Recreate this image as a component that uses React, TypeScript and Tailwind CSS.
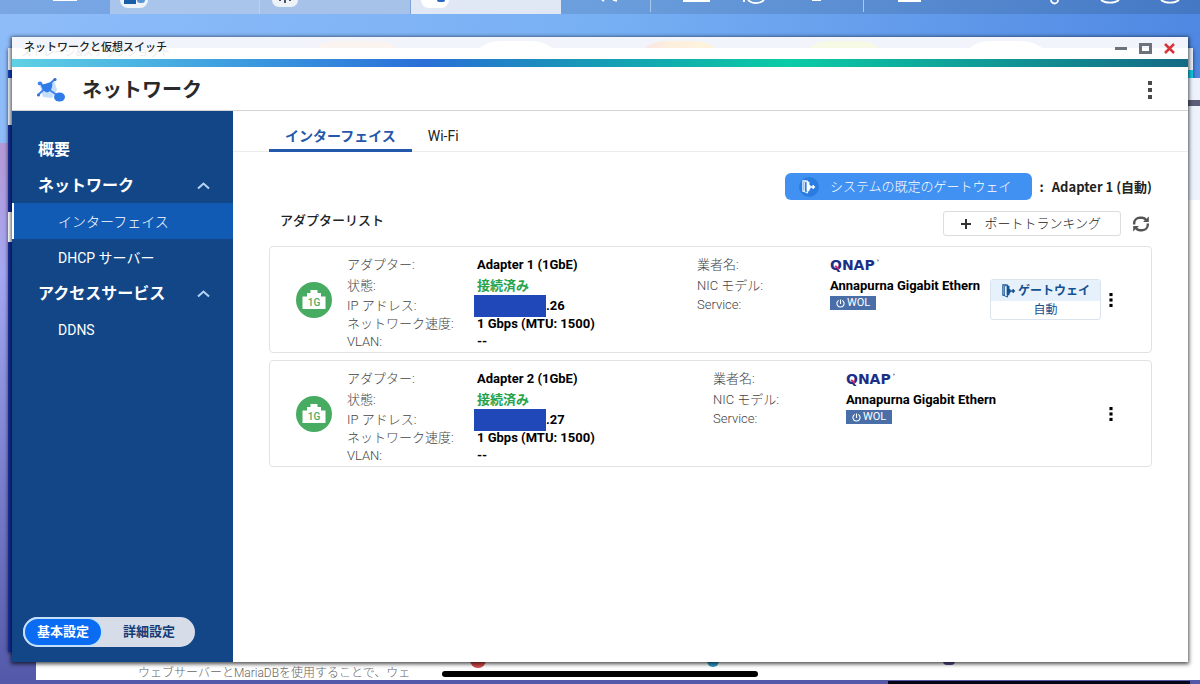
import { useState } from "react";

type Adapter = {
  name: string;
  host: string;
  gateway: boolean;
};

const adapters: Adapter[] = [
  { name: "Adapter 1 (1GbE)", host: ".26", gateway: true },
  { name: "Adapter 2 (1GbE)", host: ".27", gateway: false },
];

function NetworkLogo() {
  return (
    <svg viewBox="0 0 30 26" className="h-[26px] w-[30px]">
      <path d="M4 9 18 3l3 10-5 8-9-1Z" fill="#c5defb" />
      <path d="M3 6 24 20M19 2 2 18" stroke="#3f83ec" strokeWidth="1.800" strokeLinecap="round" />
      <path d="M5 7.500c4 0 7-2 11-2 1 5-1 9-5 10-3-1-6-4-6-8Z" fill="#2f7be8" />
      <ellipse cx="4" cy="6.500" rx="2.300" ry="2" fill="#3f83ec" />
      <circle cx="19" cy="2.500" r="1.600" fill="#3a6fd0" />
      <circle cx="2.500" cy="18" r="1.500" fill="#3a6fd0" />
      <ellipse cx="23.500" cy="20" rx="5.500" ry="4.500" fill="#2f7be8" />
    </svg>
  );
}

function Kebab({ className }: { className: string }) {
  return (
    <svg viewBox="0 0 4 18" fill="currentColor" className={className}>
      <rect width="4" height="4" />
      <rect y="7" width="4" height="4" />
      <rect y="14" width="4" height="4" />
    </svg>
  );
}

function Chevron() {
  return (
    <svg viewBox="0 0 13 8" fill="none" stroke="currentColor" strokeWidth="2" className="h-2 w-[13px] text-[#b9d3f5]">
      <path d="M1 6.500 6.500 1.500 12 6.500" />
    </svg>
  );
}

function DoorIcon({ className }: { className: string }) {
  return (
    <svg viewBox="0 0 16 16" className={className}>
      <path d="M6 2H2v11h2" fill="none" stroke="currentColor" strokeWidth="1.200" />
      <path d="M3.500 3.500 7 2v13l-3.500-1.500Z" fill="none" stroke="currentColor" strokeWidth="1" />
      <path d="M6 3h3v3.500h1V11H9v2H6Z" fill="currentColor" />
      <path d="M9 8.500h6M13 6.300v4.400" fill="none" stroke="currentColor" strokeWidth="1.500" />
    </svg>
  );
}

function RefreshIcon() {
  return (
    <svg viewBox="0 0 18 18" fill="none" stroke="#555" strokeWidth="2.400" className="h-[18px] w-[18px]">
      <path d="M2.200 9.500V8A5.500 5.500 0 0 1 7.700 2.800h2.600A5 5 0 0 1 14 5M15.800 8.500V10a5.500 5.500 0 0 1-5.500 5.200H7.700A5 5 0 0 1 4 13" />
      <path d="M16.800 1.500V7H11ZM1.200 16.500V11H7Z" fill="#555" stroke="none" />
    </svg>
  );
}

function PortIcon() {
  return (
    <svg viewBox="0 0 36 36" className="h-9 w-9">
      <circle cx="18" cy="18" r="18" fill="#47ab62" />
      <path d="M6.500 27V14.500H11V11h3.500V8h7v3H25v3.500h4.500V27Z" fill="#fff" />
      <text x="18" y="23.500" textAnchor="middle" fontSize="10" fontWeight="500" fill="#47ab62">
        1G
      </text>
    </svg>
  );
}

function QnapLogo() {
  return (
    <svg viewBox="0 0 56 20" role="img" aria-label="QNAP" className="h-5 w-14">
      <text x="0" y="15" fontSize="14" fontWeight="700" fill="#1c2f86" className="font-['DejaVu_Sans']">
        QNAP
      </text>
      <path d="m5 11 4 3" stroke="#d8266b" strokeWidth="2" />
      <circle cx="48" cy="5.500" r="1" fill="#8a95c4" />
    </svg>
  );
}

function AdapterCard({ adapter }: { adapter: Adapter }) {
  return (
    <li className="flex items-center rounded border border-[#e2e2e4] pl-[26px] text-[13px] [&_dd]:font-bold [&_dd]:whitespace-nowrap [&_dt]:font-light [&_dt]:text-[#444]">
      <PortIcon />
      <dl className={`ml-[15px] grid shrink-0 grid-cols-[130px_1fr] grid-rows-[22px_20px_19px_18px_18px] items-center pt-[7px] pb-px text-black ${adapter.gateway ? "w-[350px]" : "w-[366px]"}`}>
        <dt>アダプター:</dt>
        <dd>{adapter.name}</dd>
        <dt>状態:</dt>
        <dd className="text-[#27a34b]">接続済み</dd>
        <dt>IP アドレス:</dt>
        <dd className="flex items-center">
          <span className="-ml-[3px] h-[22px] w-[72px] shrink-0 bg-[#2148b8]" />
          {adapter.host}
        </dd>
        <dt>ネットワーク速度:</dt>
        <dd>1 Gbps (MTU: 1500)</dd>
        <dt>VLAN:</dt>
        <dd>--</dd>
      </dl>
      <dl className="grid min-w-0 flex-1 grid-cols-[133px_1fr] grid-rows-[22px_20px_18px] items-center self-start pt-[7px] text-black">
        <dt>業者名:</dt>
        <dd>
          <QnapLogo />
        </dd>
        <dt>NIC モデル:</dt>
        <dd>Annapurna Gigabit Ethern</dd>
        <dt>Service:</dt>
        <dd className="flex self-start">
          <span className="flex h-[14px] items-center gap-[2px] bg-[#4a6fa8] px-[6px] text-[11px] font-normal text-white">
            <svg viewBox="0 0 10 10" fill="none" stroke="currentColor" strokeWidth="1.200" className="h-[9px] w-[9px]">
              <path d="M3 1.500a4 4 0 1 0 4 0M5 .5v5" />
            </svg>
            WOL
          </span>
        </dd>
      </dl>
      {adapter.gateway && (
        <div className="w-[111px] shrink-0 rounded-[3px] border border-[#dbe3ee] text-center text-xs text-[#15508f]">
          <div className="flex h-[21px] items-center justify-center gap-0.5 bg-[#e6f1fc] font-bold">
            <DoorIcon className="h-[15px] w-[15px]" />
            ゲートウェイ
          </div>
          <div className="h-[18px] leading-[18px]">自動</div>
        </div>
      )}
      <button type="button" aria-label={`${adapter.name} メニュー`} className="mr-[30px] flex w-5 shrink-0 justify-center text-black">
        <Kebab className="h-[14px] w-1" />
      </button>
    </li>
  );
}

function Taskbar() {
  return (
    <div className="flex h-[14px] shrink-0 overflow-hidden bg-linear-to-r from-[#7aa6e4] via-[#6b9edc] to-[#4478c4]">
      <div className="flex w-[110px] shrink-0 justify-center pl-5">
        <span className="h-px w-6 bg-white" />
      </div>
      <div className="w-[150px] shrink-0 border-r border-[#b9cff0] bg-[#a9c5ec] pl-[10px]">
        <div className="flex h-2 w-7 items-start gap-px rounded-b-lg bg-[#eef3fa] pl-1">
          <span className="h-1 w-3 bg-[#1c5da8]" />
          <span className="h-[3px] w-2 rounded-b bg-[#5a94d6]" />
        </div>
      </div>
      <div className="w-[151px] shrink-0 border-r border-[#7fa3d8] bg-[#a6c2e9] pl-3">
        <div className="flex h-[7px] w-[26px] justify-center rounded-b-lg bg-[#eef1f5]">
          <svg viewBox="0 0 14 4" className="h-1 w-[14px]">
            <path d="M2 0v1M7 0v3M12 0v1" stroke="#4b5460" strokeWidth="2" />
          </svg>
        </div>
      </div>
      <div className="w-[150px] shrink-0 bg-[#e0e8f5] pl-[10px]">
        <div className="flex h-2 w-7 justify-center rounded-b-lg bg-white pl-3">
          <span className="h-0.5 w-2 rounded-b bg-[#2b66c4]" />
        </div>
      </div>
      <svg viewBox="0 0 639 14" preserveAspectRatio="none" fill="none" stroke="#fff" strokeWidth="1.800" className="h-[14px] min-w-0 flex-1">
        <path d="M41 0l2 1M52 0l4 1M122 1h27M337 1h23M251 0h9M183 0v2M187 0a10 8 0 0 0 16 0M490 0a3.500 3.500 0 0 0 7 0M540 0a12 8 0 0 0 18 0M600 0a12 8 0 0 0 18 0" />
        <path d="M89.500 0v12M302.500 0v12" stroke="#a9c8f0" strokeWidth="1" />
      </svg>
    </div>
  );
}

function BackWindows() {
  return (
    <>
      <div className="absolute top-12 right-[7px] bottom-8 left-2 bg-[#152f96] shadow-[0_1px_4px_rgba(0,0,0,0.6)]">
        <div className="h-[22px] bg-[#e9f0fb]" />
        <div className="h-2 bg-linear-to-r from-[#1540b8] to-[#12c8e0]" />
        <div className="h-[47px] bg-[#e9eef8]" />
        <div className="mt-[87px] h-[30px] w-1 bg-white" />
      </div>
      <div className="absolute top-[78px] right-0 bottom-1 left-9 bg-white">
        <div className="h-[122px] bg-[#edf2fd] pt-[22px]">
          <div className="h-[6px] bg-[#5c5d78]" />
        </div>
        <p className="absolute bottom-0 left-[102px] text-xs leading-[14px] font-light text-[#666]">
          ウェブサーバーとMariaDBを使用することで、ウェ
        </p>
        <span className="absolute bottom-[12px] left-[434px] h-4 w-4 rounded-full bg-[#d6484a]" />
        <span className="absolute bottom-[13px] left-[671px] h-3 w-3 rounded-full bg-[#2e9cc8]" />
        <span className="absolute bottom-[15px] left-[907px] h-2 w-3 rounded-full bg-[#5a4c8c]" />
      </div>
      <div className="absolute right-[10px] bottom-0 h-[3px] w-[302px] bg-[#050514]" />
    </>
  );
}

// desktop icons and the window behind, seen through the translucent title bar
function TitleBarBackdrop() {
  return (
    <div aria-hidden="true" className="absolute inset-0">
      <svg viewBox="0 0 1176 11" preserveAspectRatio="none" className="h-[11px] w-full">
        <defs>
          <linearGradient id="warm">
            <stop offset="0" stopColor="#fbe6e4" />
            <stop offset="0.4" stopColor="#fdf0dd" />
            <stop offset="1" stopColor="#fdf3dc" />
          </linearGradient>
        </defs>
        <path d="M304 11q8-7 20-7h40q14 0 22 7Z" fill="#fbf3ef" />
        <path d="M468 11q8-7 20-7h30q14 0 22 7Z" fill="#fff" />
        <path d="M633 11q8-7 20-7h30q12 0 20 7Z" fill="url(#warm)" />
        <path d="M797 11q8-7 20-7h30q12 0 20 7Z" fill="#f6f9e4" />
        <path d="M958 11q8-7 20-7h30q14 0 22 7Z" fill="#fff" />
      </svg>
      <p className="pl-[9px] text-[11px] leading-[10px] text-[#ebebed]">ストレージ&スナップショット</p>
    </div>
  );
}

const groups = [
  { title: "ネットワーク", items: ["インターフェイス", "DHCP サーバー"] },
  { title: "アクセスサービス", items: ["DDNS"] },
];

function Sidebar() {
  const [mode, setMode] = useState("基本設定");

  return (
    <aside className="flex w-[221px] shrink-0 flex-col justify-between bg-[#124686] pt-5 pb-[15px] text-white">
      <nav>
        <a href="#overview" className="flex h-9 items-center pt-0.5 pl-[26px] text-base font-bold">
          概要
        </a>
        {groups.map((group) => (
          <div key={group.title}>
            <button type="button" className="flex h-9 w-full items-center justify-between pt-0.5 pr-[23px] pl-[26px] text-base font-bold">
              {group.title}
              <Chevron />
            </button>
            {group.items.map((item) => (
              <a
                key={item}
                href={`#${item}`}
                className={`flex h-9 items-center border-l-2 pt-0.5 pl-11 text-sm ${item === "インターフェイス" ? "border-white bg-[#125bb5] font-light" : "border-transparent"}`}
              >
                {item}
              </a>
            ))}
          </div>
        ))}
      </nav>
      <div className="ml-[11px] flex h-[30px] w-[172px] rounded-full bg-[#d7dde8] text-[13px] font-bold">
        {["基本設定", "詳細設定"].map((label) => (
          <button
            key={label}
            type="button"
            aria-pressed={mode === label}
            onClick={() => setMode(label)}
            className={mode === label ? "w-20 rounded-full border-2 border-[#c3e0fb] bg-[#0a6cf3] text-white" : "flex-1 text-[#163d78]"}
          >
            {label}
          </button>
        ))}
      </div>
    </aside>
  );
}

export default function App() {
  return (
    <div className="relative flex h-screen min-h-[560px] flex-col overflow-hidden bg-linear-to-b from-[#b39ad8] from-22% via-[#a4a8f4] via-40% to-[#5358a8] font-['Roboto','Noto_Sans_CJK_JP',sans-serif] text-[#222]">
      <div className="absolute inset-x-0 top-0 h-[143px] bg-linear-to-r from-[#8ebcf9] via-[#78b0f4] to-[#4f88e2]" />
      <BackWindows />
      <div className="relative">
        <Taskbar />
      </div>

      <section className="relative mx-3 mt-[23px] mb-[22px] flex min-h-0 flex-1 flex-col bg-white shadow-[0_1px_4px_1px_rgba(0,0,0,0.7)]">
        <div className="relative flex h-[22px] shrink-0 items-center justify-between bg-linear-to-b from-[#f1f5fb] from-50% to-white to-50% px-3">
          <TitleBarBackdrop />
          <h1 className="relative text-[11px] font-medium">ネットワークと仮想スイッチ</h1>
          <div className="relative flex items-center gap-3">
            <button type="button" aria-label="最小化">
              <svg viewBox="0 0 12 12" className="h-3 w-3">
                <path d="M0 6.500h12" stroke="#6d737a" strokeWidth="3" />
              </svg>
            </button>
            <button type="button" aria-label="最大化">
              <svg viewBox="0 0 13 12" className="h-3 w-[13px]">
                <rect x="1.500" y="2.500" width="10" height="8" fill="none" stroke="#6d737a" strokeWidth="3" />
              </svg>
            </button>
            <button type="button" aria-label="閉じる">
              <svg viewBox="0 0 12 12" className="h-3 w-3">
                <path d="m1 2 9 9M10 2l-9 9" stroke="#d8343a" strokeWidth="2.500" />
              </svg>
            </button>
          </div>
        </div>
        <div className="relative h-2 shrink-0 bg-linear-to-r from-[#5fd0e4] via-[#2a6fd8] via-35% to-[#146a84]">
          <div className="h-full bg-linear-to-r from-transparent from-35% via-[#0acca6] via-66% to-[#146a84]" />
        </div>
        <header className="flex h-11 shrink-0 items-center justify-between border-b border-[#d4d4d8] pt-0.5 pr-9 pl-6">
          <div className="flex items-center gap-4">
            <NetworkLogo />
            <h2 className="text-xl leading-6 font-bold text-[#2a2a2a]">ネットワーク</h2>
          </div>
          <button type="button" aria-label="メニュー" className="text-[#4a4a4a]">
            <Kebab className="h-[18px] w-1" />
          </button>
        </header>

        <div className="flex min-h-0 flex-1">
          <Sidebar />
          <div className="flex min-w-0 flex-1 flex-col">
            <div role="tablist" className="flex h-[41px] shrink-0 border-b border-[#ececee] pl-9 text-sm">
              <button type="button" role="tab" aria-selected="true" className="-mb-px border-b-[3px] border-[#2458ac] px-4 pt-3 font-bold text-[#2458ac]">
                インターフェイス
              </button>
              <button type="button" role="tab" aria-selected="false" className="px-4 pt-3 pb-0.5">
                Wi-Fi
              </button>
            </div>

            <main className="px-9 pt-[21px]">
              <div className="flex items-center justify-end gap-2">
                <button type="button" className="flex h-[27px] items-center gap-[11px] rounded-md bg-[#4191f2] pr-5 pl-[14px] text-[13px] font-light text-white">
                  <span className="flex h-5 w-5 items-center justify-center rounded-full bg-[#2a7ce0]">
                    <DoorIcon className="h-[15px] w-[15px]" />
                  </span>
                  システムの既定のゲートウェイ
                </button>
                <p className="flex gap-2 font-['Noto_Sans_CJK_JP',sans-serif] text-[13px] leading-5 font-bold">
                  <span>:</span>
                  <span>Adapter 1 (自動)</span>
                </p>
              </div>
              <div className="mt-[11px] flex items-center justify-between">
                <h3 className="self-start pl-[11px] text-[13px] leading-5 font-medium">アダプターリスト</h3>
                <div className="flex items-center gap-[11px] pr-0.5">
                  <button type="button" className="flex h-[25px] items-center gap-3 rounded-[3px] border border-[#dcdcde] pr-[19px] pl-4 text-[13px] font-light">
                    <svg viewBox="0 0 12 12" className="h-3 w-3">
                      <path d="M1 6h10M6 1v10" stroke="#333" strokeWidth="2" />
                    </svg>
                    ポートトランキング
                  </button>
                  <button type="button" aria-label="更新">
                    <RefreshIcon />
                  </button>
                </div>
              </div>
              <ul className="mt-[10px] flex flex-col gap-[7px]">
                {adapters.map((adapter) => (
                  <AdapterCard key={adapter.name} adapter={adapter} />
                ))}
              </ul>
            </main>
          </div>
        </div>
      </section>

      <div className="absolute bottom-[7px] left-1/2 h-1.5 w-[316px] -translate-x-1/2 rounded-full bg-black" />
    </div>
  );
}
